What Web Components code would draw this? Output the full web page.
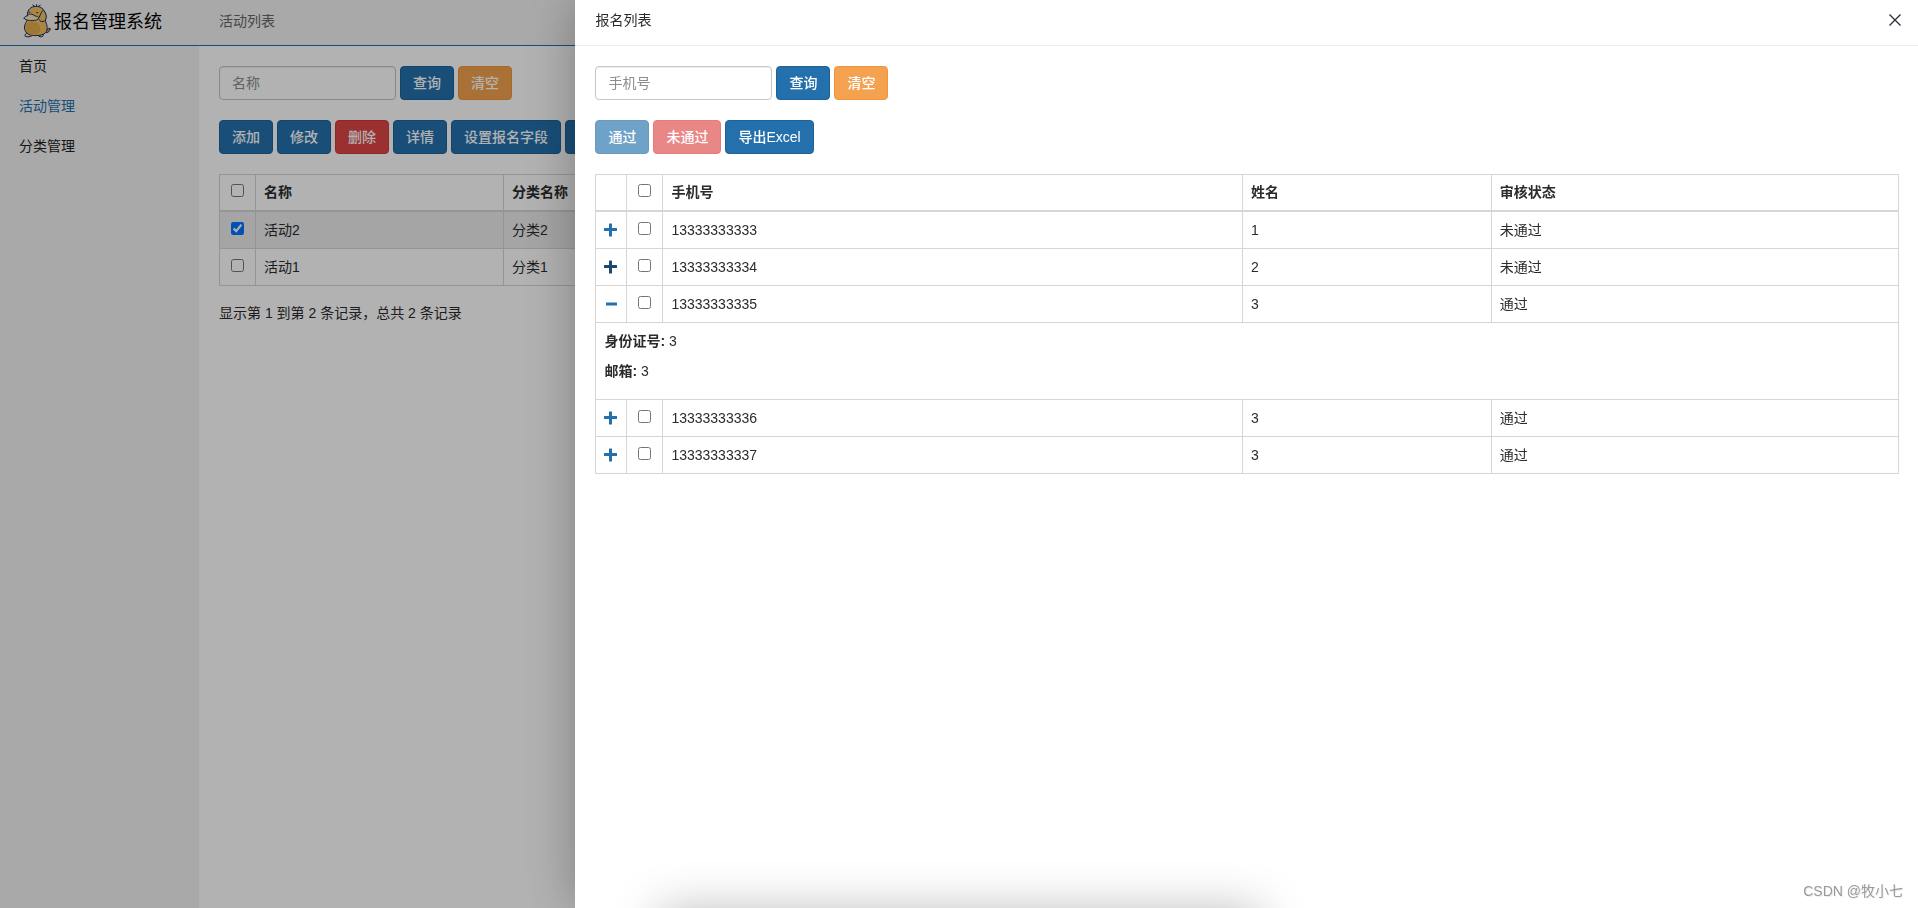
<!DOCTYPE html>
<html lang="zh-CN">
<head>
<meta charset="utf-8">
<title>报名管理系统</title>
<style>
html, body { height: 100%; margin: 0; }
body {
  font: 14px/20px "Liberation Sans", "Noto Sans CJK SC", sans-serif;
  color: #2b2b2b;
  background: #fff;
  overflow: hidden;
  --primary: #2370ad;
  --line: #d6d6d6;
}
</style>
</head>
<body>
<admin-layout>
  <brand-logo slot="brand"></brand-logo>
  <span slot="title">活动列表</span>
  <side-nav slot="nav"></side-nav>
  <search-bar placeholder="名称"></search-bar>
  <button-row>
    <ui-button>添加</ui-button>
    <ui-button>修改</ui-button>
    <ui-button variant="danger">删除</ui-button>
    <ui-button>详情</ui-button>
    <ui-button>设置报名字段</ui-button>
    <ui-button label="报名列表"></ui-button>
  </button-row>
  <activity-table></activity-table>
</admin-layout>
<side-drawer heading="报名列表">
  <search-bar placeholder="手机号"></search-bar>
  <button-row>
    <ui-button disabled>通过</ui-button>
    <ui-button variant="danger" disabled>未通过</ui-button>
    <ui-button>导出Excel</ui-button>
  </button-row>
  <signup-table></signup-table>
</side-drawer>
<page-watermark>CSDN @牧小七</page-watermark>

<script>
class Base extends HTMLElement {
  constructor() {
    super();
    this.attachShadow({ mode: 'open' });
  }
  connectedCallback() {
    this.shadowRoot.innerHTML = `<style>*{box-sizing:border-box}${this.styles()}</style>${this.markup()}`;
  }
}

customElements.define('ui-button', class extends Base {
  styles() {
    return `
    :host { display: block; flex: none; --bg: var(--primary); --edge: #1f6298; }
    :host([variant=danger]) { --bg: #dd4645; --edge: #d43634; }
    :host([variant=warning]) { --bg: #f4a24f; --edge: #f2953a; }
    button { display: block; font: inherit; font-weight: 500; color: #fff; height: 34px; min-width: 54px; padding: 6px 12px; margin: 0;
      border: 1px solid var(--edge); border-radius: 4px; background: var(--bg); white-space: nowrap; cursor: pointer; }
    button:disabled { opacity: .65; cursor: not-allowed; }`;
  }
  markup() {
    const label = this.getAttribute('label');
    return `<button type="button" ${label ? `aria-label="${label}"` : ''} ${this.hasAttribute('disabled') ? 'disabled' : ''}><slot></slot></button>`;
  }
});

customElements.define('button-row', class extends Base {
  styles() { return `:host { display: flex; gap: 4px; }`; }
  markup() { return `<slot></slot>`; }
});

customElements.define('search-bar', class extends Base {
  styles() {
    return `
    :host { display: block; }
    form { display: flex; gap: 4px; margin: 0; }
    input { font: inherit; color: #555; width: 177px; height: 34px; padding: 6px 12px; margin: 0; background: #fff;
      border: 1px solid #c6c6c6; border-radius: 4px; box-shadow: inset 0 1px 1px rgba(0,0,0,.075); outline: 0; }
    input::placeholder { color: #8c8c8c; opacity: 1; }`;
  }
  markup() {
    const p = this.getAttribute('placeholder');
    return `<form><input type="text" aria-label="${p}" placeholder="${p}">
      <ui-button>查询</ui-button><ui-button variant="warning">清空</ui-button></form>`;
  }
});

customElements.define('brand-logo', class extends Base {
  styles() {
    return `
    :host { display: flex; align-items: center; gap: 3px; color: #000; font-size: 18px; line-height: 24px; white-space: nowrap; }
    svg { display: block; flex: none; }
    span { padding-top: 2px; }`;
  }
  markup() {
    return `<svg width="28" height="34" viewBox="0 0 28 34" aria-hidden="true" stroke="#1b2769" stroke-width="1" stroke-linecap="round" stroke-linejoin="round">
      <path d="M23.300 28.800c2-.2 3.900-1.900 4-4.200-1.300-.6-2.500.1-3.500 1.400" fill="#e0963c"/>
      <path d="M3.500 29.300c-1.500.8-2 2.200-1.200 3 1.800.9 5.500.8 6.600-.6M14.800 31.200c.9 1.700 3.700 2.200 5 1 .8-1.100.3-2.200-.6-3" fill="#f4e4bc"/>
      <path d="M9.800.9 12 2.600M13.600.6v1.800M17.300 1.200 15.200 2.500" fill="none"/>
      <path d="M4.300 10.500C4.500 5.600 8 2.400 12.800 2.400c4.900 0 8.600 2.500 9.200 7.300.4 3-.2 5.300.6 7.800 1.900 4.500 2.300 8.300-.1 11.200-3.300 3.700-15 3.900-18.600.5C.3 25.700 1 20.500 4.200 16.500z" fill="#f3c25c"/>
      <path d="M3.800 19.500c3.200-2.600 10-2.400 12.600 1.700 1.700 3.700.6 7.600-2 9.200-3.600.8-7.200.3-9.800-1.500-2.600-2.600-2.400-6.500-.8-9.400z" fill="#e4ab4b" stroke="none"/>
      <path d="M16.300 13.200c1-2.600 2-5.200 3.900-6.900 1.700 1.200 3.200 3.800 3.100 6.800-.2 2.300-1.200 4.200-3.300 4.500-1.800.2-3.200-.6-3.700-1.900" fill="#f3c25c"/>
      <path d="M1.200 14.300c.2-1.300 1.400-2.200 3.300-2.600 1-1.300 2.700-1.900 4.200-1.500 1.400.3 2.400 1.200 3.500 1.800 1.700.2 3.400.8 3.600 1.900-.5 1.900-3.500 2.700-6.600 2.700-3.500 0-7.600-.5-8-2.300z" fill="#f4e4bc"/>
      <path d="M5.900 8.200h1M13.800 8.600h1" fill="none"/>
      </svg><span>报名管理系统</span>`;
  }
});

customElements.define('side-nav', class extends Base {
  styles() {
    return `
    :host { display: block; }
    ul { list-style: none; margin: 0; padding: 0; }
    a { display: block; padding: 10px 19px; color: #222; text-decoration: none; }
    a[aria-current] { color: var(--primary); }`;
  }
  markup() {
    return `<nav><ul><li><a href="#home">首页</a></li>
      <li><a href="#activity" aria-current="page">活动管理</a></li>
      <li><a href="#category">分类管理</a></li></ul></nav>`;
  }
});

customElements.define('admin-layout', class extends Base {
  styles() {
    return `
    :host { display: grid; grid-template: 46px 1fr / 199px 1fr; height: 100%; }
    header { grid-column: 1 / -1; display: grid; grid-template-columns: subgrid; align-items: center;
      padding-bottom: 4px; background: #f3f3f3; border-bottom: 1px solid var(--primary); }
    .brand { padding-left: 23px; }
    .title { padding-left: 20px; color: #666; }
    aside { background: #f3f3f3; }
    main { display: flex; flex-direction: column; gap: 20px; padding: 20px; min-width: 0; }`;
  }
  markup() {
    return `<header><div class="brand"><slot name="brand"></slot></div><div class="title"><slot name="title"></slot></div></header>
      <aside><slot name="nav"></slot></aside><main><slot></slot></main>`;
  }
});

customElements.define('side-drawer', class extends Base {
  styles() {
    return `
    :host { position: fixed; inset: 0; display: flex; justify-content: flex-end; background: rgba(0,0,0,.3); overflow: hidden; }
    section { width: 70%; background: #fff; box-shadow: 1px 1px 50px rgba(0,0,0,.3); display: flex; flex-direction: column; }
    header { display: flex; align-items: center; justify-content: space-between; height: 46px; padding: 0 16px 5px 20px;
      border-bottom: 1px solid #eee; }
    h2 { font: inherit; margin: 0; }
    button { display: block; border: 0; background: none; padding: 0; margin: 0; width: 14px; height: 14px; }
    svg { display: block; }
    .body { display: flex; flex-direction: column; gap: 20px; padding: 20px 19px 20px 20px; }
    .below { position: absolute; top: 100%; left: 50%; width: 600px; height: 60px; margin: 4px 0 0 -300px;
      box-shadow: 1px 1px 50px rgba(0,0,0,.3); }`;
  }
  markup() {
    return `<section role="dialog" aria-label="${this.getAttribute('heading')}">
      <header><h2>${this.getAttribute('heading')}</h2>
      <button type="button" aria-label="关闭"><svg width="14" height="14" viewBox="0 0 14 14"><path d="M1.500 1.500 12.500 12.500M12.500 1.500 1.500 12.500" stroke="#2d2c3b" stroke-width="1.300" fill="none"/></svg></button></header>
      <div class="body"><slot></slot></div></section><div class="below"></div>`;
  }
});

const tableStyles = `
  :host { display: block; }
  table { width: 100%; table-layout: fixed; border-collapse: collapse; border-spacing: 0; }
  th, td { border: 1px solid var(--line); padding: 8px; height: 37px; text-align: left; line-height: 20px; }
  thead th { border-bottom-width: 2px; padding: 7px 8px; height: 36px; }
  th.pick, td.pick { padding: 0; }
  .pick input { display: block; width: 13px; height: 13px; margin: 0 auto 3px; }
  tr.selected td { background: #ececec; }
  td.icon { padding: 0; }
  .icon a { display: block; width: 14px; margin: 0 auto; color: var(--primary); }
  .icon a.hover { color: #1a4a72; }
  svg { display: block; }
  p { margin: 0 0 10px; }
  .info { padding: 10px 0; margin-top: 7px; }`;
const pick = (label, checked) => `<td class="pick"><input type="checkbox" aria-label="${label}" ${checked ? 'checked' : ''}></td>`;
const pickAll = `<th class="pick"><input type="checkbox" aria-label="全选"></th>`;

customElements.define('activity-table', class extends Base {
  styles() { return tableStyles; }
  markup() {
    const rows = [['活动2', '分类2', true], ['活动1', '分类1', false]];
    return `<table><colgroup><col style="width:36px"><col style="width:248px"><col></colgroup>
      <thead><tr>${pickAll}<th>名称</th><th>分类名称</th></tr></thead><tbody>
      ${rows.map(([n, c, s]) => `<tr class="${s ? 'selected' : ''}">${pick(n, s)}<td>${n}</td><td>${c}</td></tr>`).join('')}
      </tbody></table><div class="info">显示第 1 到第 2 条记录，总共 2 条记录</div>`;
  }
});

customElements.define('signup-table', class extends Base {
  styles() { return tableStyles; }
  markup() {
    const rows = [
      ['13333333333', '1', '未通过'],
      ['13333333334', '2', '未通过', { hover: true }],
      ['13333333335', '3', '通过', { detail: [['身份证号', '3'], ['邮箱', '3']] }],
      ['13333333336', '3', '通过'],
      ['13333333337', '3', '通过']
    ];
    const plus = 'M5.500.5h2a.5.5 0 0 1 .5.500V5h4.500a.5.5 0 0 1 .5.500v2a.5.5 0 0 1-.5.500H8v5a.5.5 0 0 1-.5.500h-2a.5.5 0 0 1-.5-.5V8H.500a.5.5 0 0 1-.5-.5v-2a.5.5 0 0 1 .5-.5H5V1a.5.5 0 0 1 .5-.5z';
    const minus = 'M2.500 5.500h10a.5.5 0 0 1 .5.500v2a.5.5 0 0 1-.5.500h-10a.5.5 0 0 1-.5-.5V6a.5.5 0 0 1 .5-.5z';
    const row = ([phone, name, state, o = {}]) => `<tr><td class="icon"><a href="#detail" class="${o.hover ? 'hover' : ''}" aria-label="${o.detail ? '收起' : '展开'}">
      <svg width="14" height="14" viewBox="0 0 14 14"><path fill="currentColor" d="${o.detail ? minus : plus}"/></svg></a></td>
      ${pick(phone)}<td>${phone}</td><td>${name}</td><td>${state}</td></tr>` +
      (o.detail ? `<tr><td colspan="5">${o.detail.map(([k, v]) => `<p><b>${k}:</b> ${v}</p>`).join('')}</td></tr>` : '');
    return `<table><colgroup><col style="width:31px"><col style="width:36px"><col style="width:44.500%"><col style="width:19.100%"><col></colgroup>
      <thead><tr><th></th>${pickAll}<th>手机号</th><th>姓名</th><th>审核状态</th></tr></thead>
      <tbody>${rows.map(row).join('')}</tbody></table>`;
  }
});

customElements.define('page-watermark', class extends Base {
  styles() {
    return `:host { position: fixed; right: 15px; bottom: 7px; color: #999; text-shadow: 1px 1px 0 #eee; white-space: nowrap; }`;
  }
  markup() { return `<slot></slot>`; }
});
</script>
</body>
</html>
